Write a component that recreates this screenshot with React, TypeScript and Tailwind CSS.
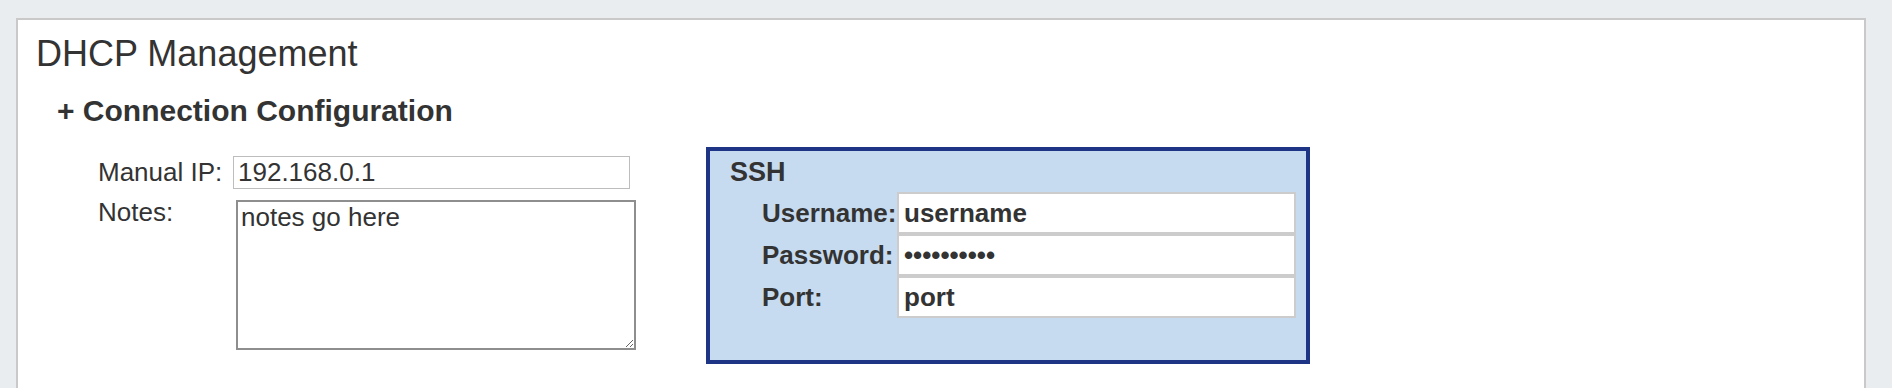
import React from "react";

export default function App() {
  return (
    <div className="w-[1892px] h-[388px] overflow-hidden bg-[#e9edf0] pt-[18px] pl-[16px] pr-[26px] font-['Liberation_Sans',Arial,Helvetica,sans-serif] text-[#333333]">
      <div className="h-[400px] border-2 border-[#c9c9c9] bg-white pl-[18px] pt-[14px]">
        <h1 className="text-[36px] leading-[40px] font-normal">DHCP Management</h1>
        <h3 className="mt-[20px] ml-[21px] text-[30px] leading-[34px] font-bold">+ Connection Configuration</h3>
        <div className="mt-[19px] ml-[62px] flex items-start">
          <div className="mt-[9px] w-[538px] flex flex-col">
            <div className="flex">
              <label className="w-[135px] text-[26px] leading-[33px]">Manual IP:</label>
              <input
                type="text"
                defaultValue="192.168.0.1"
                className="h-[33px] w-[397px] border border-[#bdbdbd] px-[4px] text-[26px] text-[#333333] outline-none"
              />
            </div>
            <div className="mt-[7px] flex items-start">
              <label className="w-[135px] text-[26px] leading-[33px]">Notes:</label>
              <textarea
                defaultValue="notes go here"
                className="mt-[4px] ml-[3px] w-[400px] h-[150px] border-2 border-[#8e8e8e] pl-[3px] pt-0 text-[26px] leading-[30px] text-[#333333] outline-none"
              />
            </div>
          </div>
          <div className="ml-[70px] w-[604px] h-[217px] border-4 border-[#1e3585] bg-[#c6dbf0] pt-[6px] pl-[20px]">
            <div className="text-[27px] leading-[30px] font-bold">SSH</div>
            <div className="mt-[5px] ml-[32px] flex flex-col">
              <div className="flex">
                <label className="w-[135px] text-[26px] leading-[42px] font-bold">Username:</label>
                <input
                  type="text"
                  defaultValue="username"
                  className="w-[399px] h-[42px] border-2 border-[#cccccc] bg-white pl-[5px] text-[26px] font-bold text-[#333333] outline-none"
                />
              </div>
              <div className="flex">
                <label className="w-[135px] text-[26px] leading-[42px] font-bold">Password:</label>
                <input
                  type="password"
                  defaultValue="password12"
                  className="w-[399px] h-[42px] border-2 border-[#cccccc] bg-white pl-[5px] text-[26px] font-bold text-[#333333] outline-none"
                />
              </div>
              <div className="flex">
                <label className="w-[135px] text-[26px] leading-[42px] font-bold">Port:</label>
                <input
                  type="text"
                  defaultValue="port"
                  className="w-[399px] h-[42px] border-2 border-[#cccccc] bg-white pl-[5px] text-[26px] font-bold text-[#333333] outline-none"
                />
              </div>
            </div>
          </div>
        </div>
      </div>
    </div>
  );
}
